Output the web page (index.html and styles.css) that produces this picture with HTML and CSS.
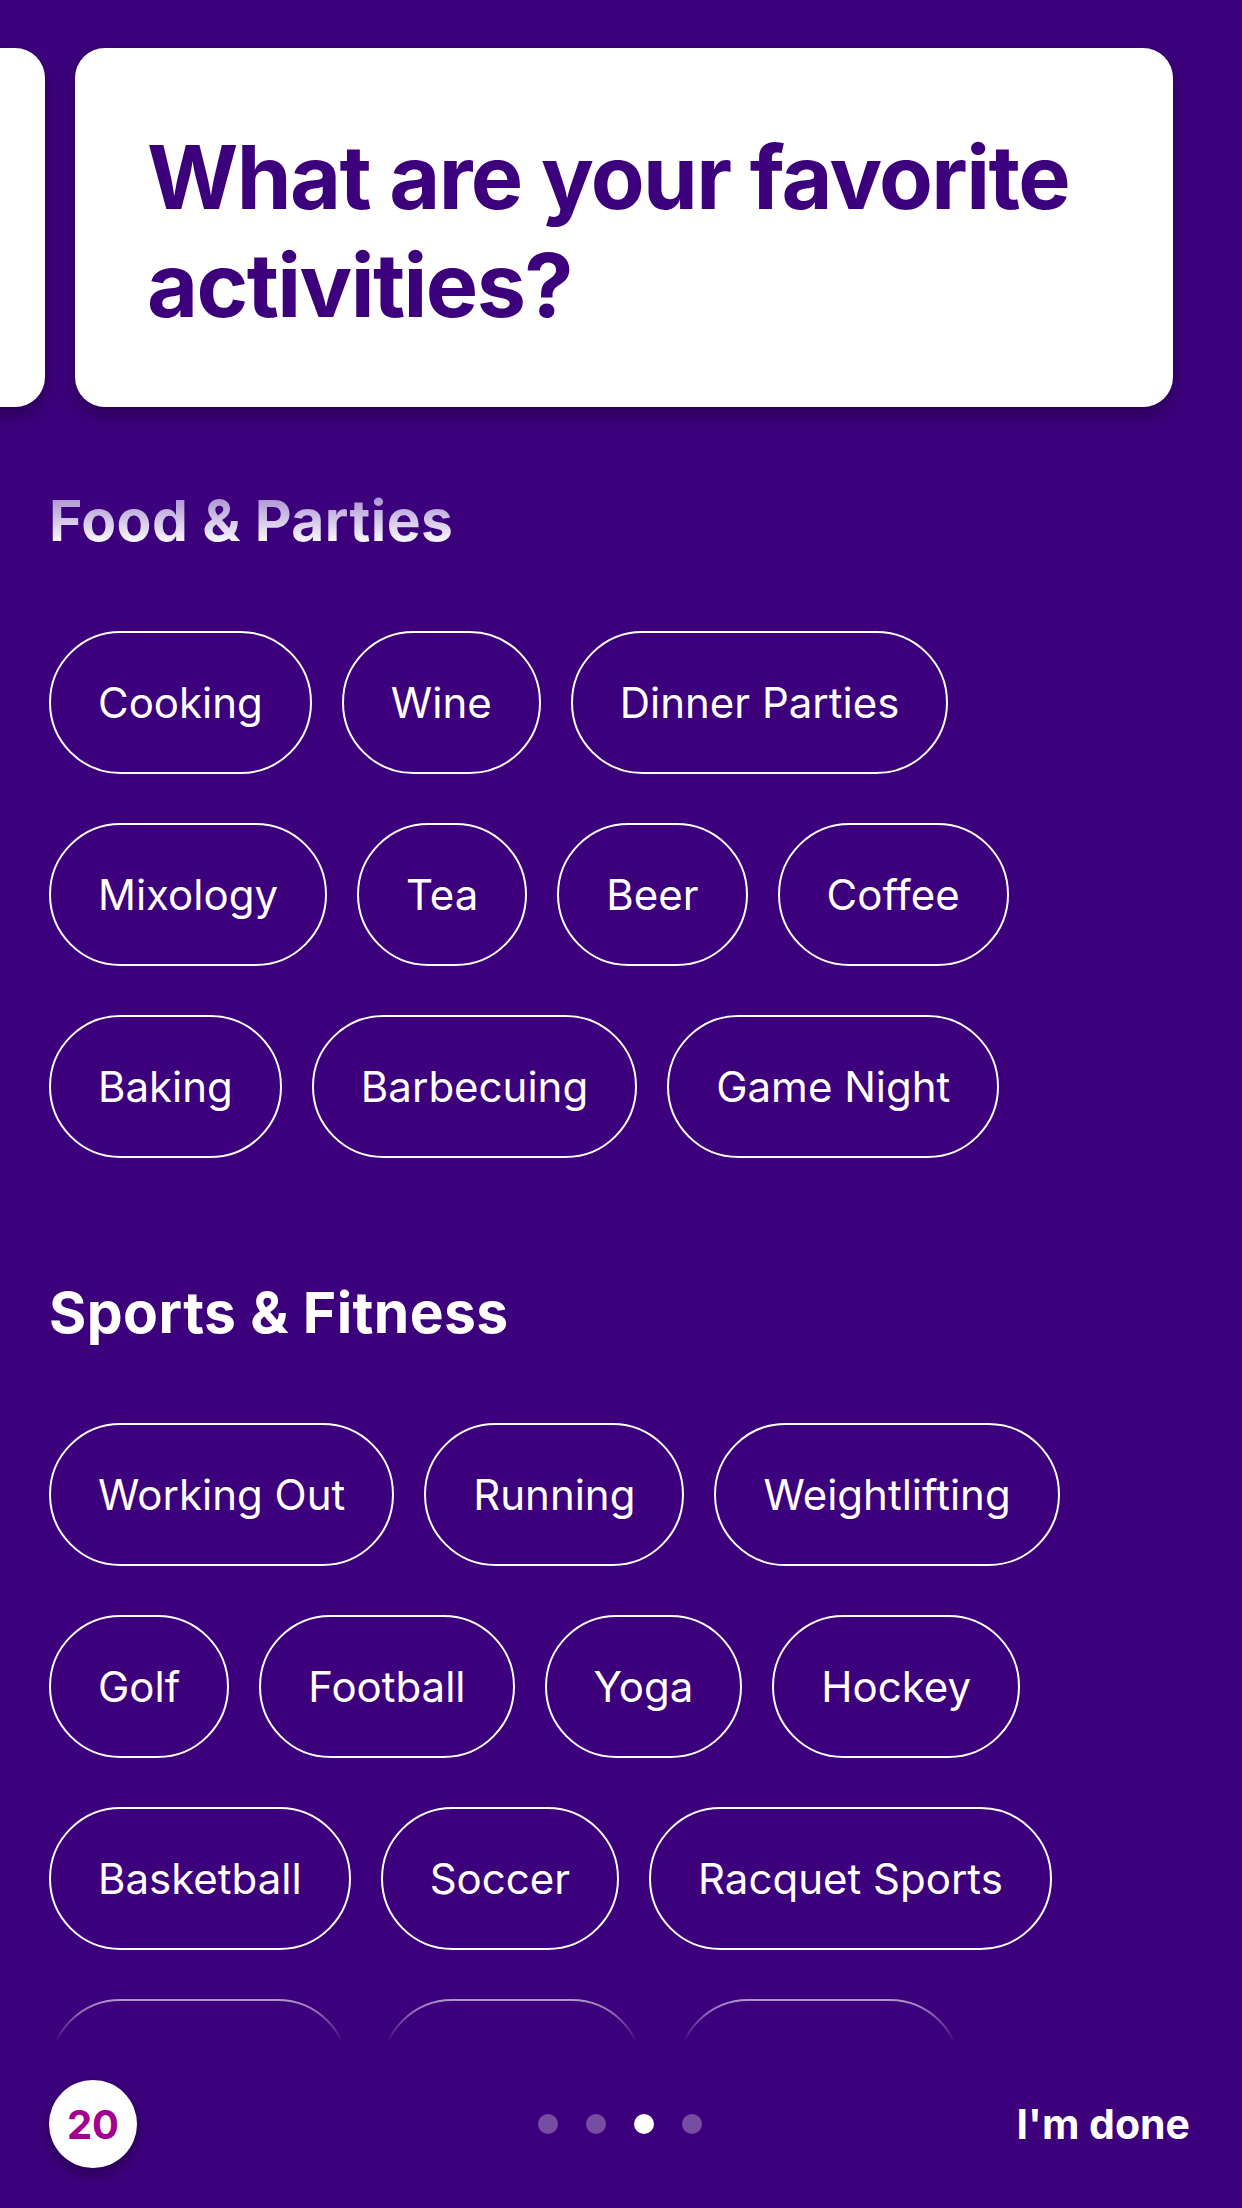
FILE: index.html
```html
<!DOCTYPE html>
<html lang="en">
<head>
<meta charset="utf-8">
<title>Activities</title>
<link rel="stylesheet" href="styles.css">
</head>
<body>
<div class="page">
  <div class="carousel">
    <div class="card card-prev"></div>
    <div class="card">
      <h1 class="question">What are your favorite activities?</h1>
    </div>
  </div>

  <section class="group">
    <h2 class="group-title faded">Food &amp; Parties</h2>
    <div class="chips">
      <div class="chip-row">
        <span class="chip">Cooking</span>
        <span class="chip">Wine</span>
        <span class="chip">Dinner Parties</span>
      </div>
      <div class="chip-row">
        <span class="chip">Mixology</span>
        <span class="chip">Tea</span>
        <span class="chip">Beer</span>
        <span class="chip">Coffee</span>
      </div>
      <div class="chip-row">
        <span class="chip">Baking</span>
        <span class="chip">Barbecuing</span>
        <span class="chip">Game Night</span>
      </div>
    </div>
  </section>

  <section class="group">
    <h2 class="group-title">Sports &amp; Fitness</h2>
    <div class="chips">
      <div class="chip-row">
        <span class="chip">Working Out</span>
        <span class="chip">Running</span>
        <span class="chip">Weightlifting</span>
      </div>
      <div class="chip-row">
        <span class="chip">Golf</span>
        <span class="chip">Football</span>
        <span class="chip">Yoga</span>
        <span class="chip">Hockey</span>
      </div>
      <div class="chip-row">
        <span class="chip">Basketball</span>
        <span class="chip">Soccer</span>
        <span class="chip">Racquet Sports</span>
      </div>
      <div class="chip-row">
        <span class="chip chip-empty w300"></span>
        <span class="chip chip-empty w262"></span>
        <span class="chip chip-empty w284"></span>
      </div>
    </div>
  </section>

  <div class="footer">
    <div class="bar">
      <div class="counter">20</div>
      <div class="dots">
        <span class="dot"></span>
        <span class="dot"></span>
        <span class="dot active"></span>
        <span class="dot"></span>
      </div>
      <div class="done">I'm done</div>
    </div>
  </div>
</div>
</body>
</html>
```

FILE: styles.css
```css
* { box-sizing: border-box; }

html, body {
  margin: 0;
  padding: 0;
  background: #3d007d;
}

body {
  font-family: Inter, "Noto Sans", "Liberation Sans", sans-serif;
  color: #ffffff;
}

.page {
  position: relative;
  width: 1242px;
  height: 2208px;
  overflow: hidden;
  background: #3d007d;
}

.carousel {
  display: flex;
  gap: 30px;
  padding-top: 48px;
  margin-left: -1053px;
}

.card {
  flex: 0 0 1098px;
  height: 359px;
  background: #ffffff;
  border-radius: 30px;
  padding: 75px 75px 0 72px;
  box-shadow: 0 8px 18px rgba(25, 0, 55, 0.55);
}

.question {
  margin: 0;
  font-size: 88px;
  line-height: 108px;
  font-weight: 700;
  letter-spacing: -1.6px;
  color: #3d007d;
}

.group {
  padding-left: 49px;
}

.group-title {
  margin: 80px 0 0;
  font-size: 57px;
  line-height: 68px;
  font-weight: 700;
  letter-spacing: 0.4px;
  color: #ffffff;
}

.group + .group .group-title {
  margin-top: 121px;
}

.faded {
  background: linear-gradient(to bottom, #a58bcf 10%, #ffffff 85%);
  -webkit-background-clip: text;
  background-clip: text;
  color: transparent;
  display: inline-block;
}

.chips {
  display: flex;
  flex-direction: column;
  gap: 49px;
  margin-top: 76px;
}

.chip-row {
  display: flex;
  gap: 30px;
}

.chip {
  display: inline-flex;
  align-items: center;
  height: 143px;
  padding: 0 47px;
  border: 2px solid #ffffff;
  border-radius: 72px;
  font-size: 42px;
  font-weight: 400;
  color: #ffffff;
  white-space: nowrap;
}

.chip-empty { padding: 0; }
.w300 { width: 300px; }
.w262 { width: 262px; margin-left: 2px; }
.w284 { width: 284px; margin-left: 4px; }

.footer {
  position: absolute;
  left: 0;
  right: 0;
  bottom: 0;
  height: 238px;
  padding: 0 52px 40px 49px;
  display: flex;
  align-items: flex-end;
  background: linear-gradient(to bottom, rgba(61, 0, 125, 0) 0px, #3d007d 72px);
}

.bar {
  width: 100%;
  display: grid;
  grid-template-columns: 1fr auto 1fr;
  align-items: center;
}

.counter {
  width: 88px;
  height: 88px;
  border-radius: 50%;
  background: #ffffff;
  display: flex;
  align-items: center;
  justify-content: center;
  font-size: 40px;
  font-weight: 700;
  color: #a4008f;
  box-shadow: 0 6px 14px rgba(20, 0, 45, 0.55);
}

.dots {
  display: flex;
  gap: 28px;
}

.dot {
  width: 20px;
  height: 20px;
  border-radius: 50%;
  background: rgba(255, 255, 255, 0.3);
}

.dot.active {
  background: #ffffff;
}

.done {
  justify-self: end;
  font-size: 41px;
  font-weight: 700;
  color: #ffffff;
}
```
